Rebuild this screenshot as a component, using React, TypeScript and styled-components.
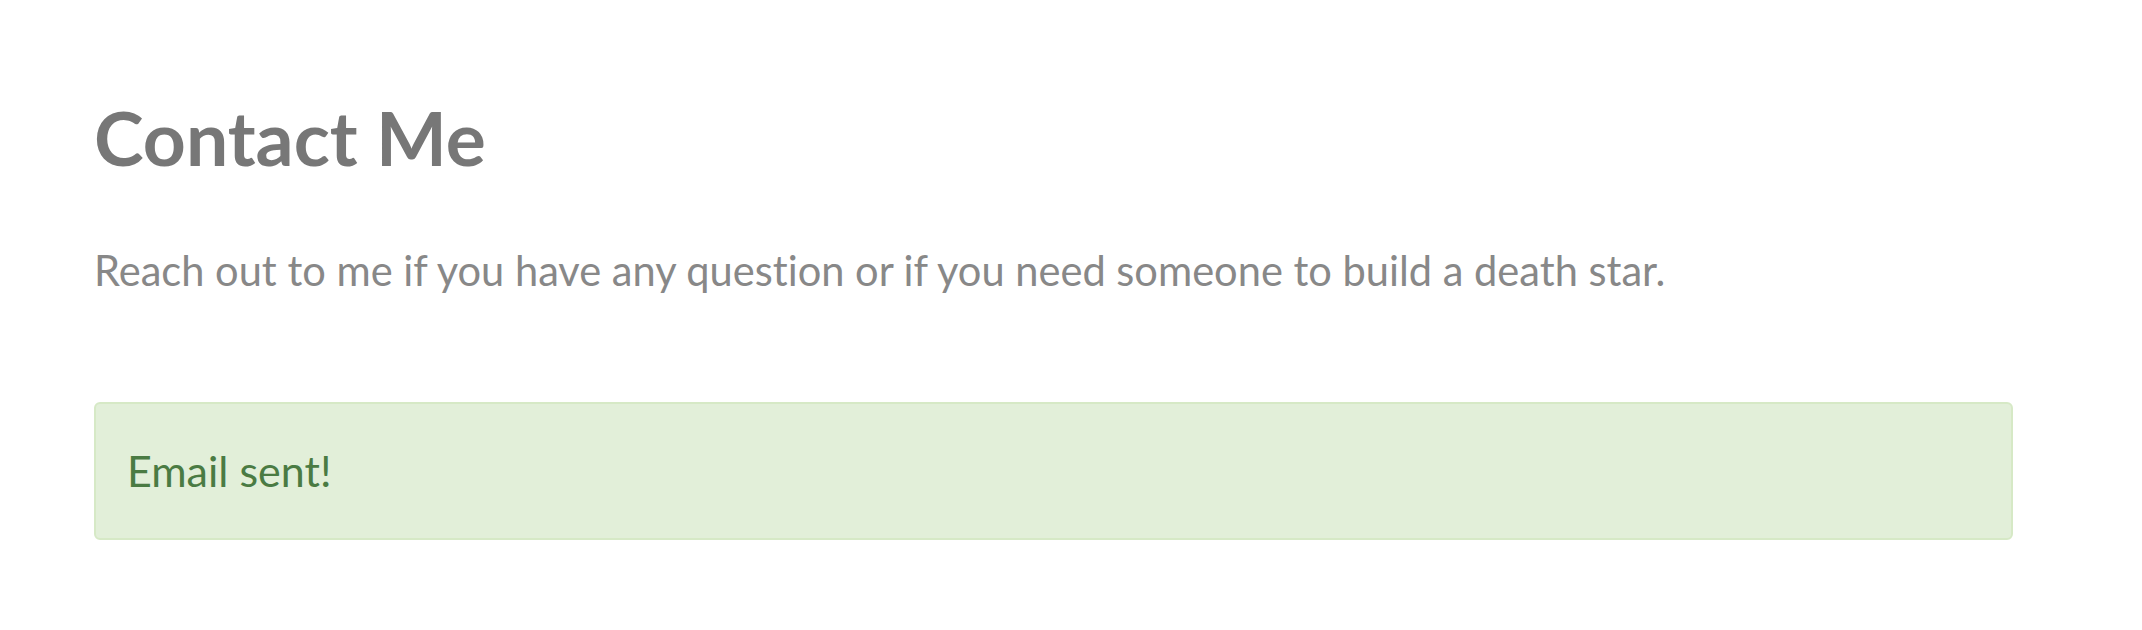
import React from "react";
import styled, { createGlobalStyle } from "styled-components";

const Global = createGlobalStyle`
  html, body { margin: 0; padding: 0; background: #fff; }
  body { font-family: Lato, "Open Sans", sans-serif; }
`;

const Page = styled.main`
  padding: 96px 129px 0 94px;
  display: flex;
  flex-direction: column;
`;

const Title = styled.h1`
  margin: 0;
  font-size: 75px;
  font-weight: 700;
  color: #777;
  line-height: 1.1;
`;

const Lead = styled.p`
  margin: 62px 0 0;
  font-size: 41.6px;
  color: #888;
  line-height: 1.4;
  font-variant-ligatures: none;
`;

const Alert = styled.div`
  margin-top: 103px;
  box-sizing: border-box;
  height: 138px;
  padding: 0 31px;
  display: flex;
  align-items: center;
  background: #e2efd9;
  border: 2px solid #d6e9c6;
  border-radius: 6px;
  color: #4a7b43;
  font-size: 43px;
`;

export default function App() {
  return (
    <>
      <Global />
      <Page>
        <Title>Contact Me</Title>
        <Lead>Reach out to me if you have any question or if you need someone to build a death star.</Lead>
        <Alert>Email sent!</Alert>
      </Page>
    </>
  );
}
